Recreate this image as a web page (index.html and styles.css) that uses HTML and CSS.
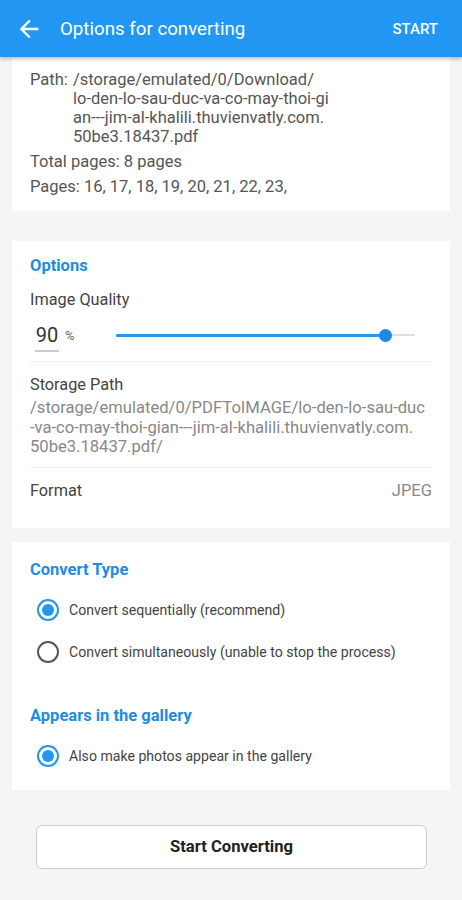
FILE: index.html
```html
<!DOCTYPE html>
<html lang="en">
<head>
    <meta charset="UTF-8">
    <title>Options for converting</title>
    <link rel="stylesheet" href="styles.css">
</head>
<body>
    <div class="app-bar">
        <svg class="back-icon" width="28" height="28" viewBox="0 0 24 24">
            <path d="M20 11H7.83l5.59-5.59L12 4l-8 8 8 8 1.41-1.41L7.83 13H20v-2z" fill="#fff"/>
        </svg>
        <div class="app-title">Options for converting</div>
        <div class="app-action">START</div>
    </div>

    <div class="content">
        <!-- File info -->
        <div class="card info-card">
            <div class="path-row">
                <span class="path-label">Path:</span>
                <span class="path-value">/storage/emulated/0/Download/<br>lo-den-lo-sau-duc-va-co-may-thoi-gi<br>an---jim-al-khalili.thuvienvatly.com.<br>50be3.18437.pdf</span>
            </div>
            <div class="info-line">Total pages: 8 pages</div>
            <div class="info-line">Pages: 16, 17, 18, 19, 20, 21, 22, 23,</div>
        </div>

        <!-- Options -->
        <div class="card options-card">
            <div class="section-title">Options</div>
            <div class="label">Image Quality</div>
            <div class="quality-row">
                <div class="quality-value">90</div>
                <div class="quality-unit">%</div>
                <div class="slider">
                    <div class="slider-fill" style="width: 90%"></div>
                    <div class="slider-thumb" style="left: 90%"></div>
                </div>
            </div>
            <div class="divider"></div>
            <div class="label storage-label">Storage Path</div>
            <div class="storage-path">/storage/emulated/0/PDFToIMAGE/lo-den-lo-sau-duc<br>-va-co-may-thoi-gian---jim-al-khalili.thuvienvatly.com.<br>50be3.18437.pdf/</div>
            <div class="divider"></div>
            <div class="format-row">
                <span class="label">Format</span>
                <span class="format-value">JPEG</span>
            </div>
        </div>

        <!-- Convert type -->
        <div class="card type-card">
            <div class="section-title">Convert Type</div>
            <div class="radio-row">
                <span class="radio checked"></span>
                <span>Convert sequentially (recommend)</span>
            </div>
            <div class="radio-row">
                <span class="radio"></span>
                <span>Convert simultaneously (unable to stop the process)</span>
            </div>
            <div class="section-title gallery-title">Appears in the gallery</div>
            <div class="radio-row">
                <span class="radio checked"></span>
                <span>Also make photos appear in the gallery</span>
            </div>
        </div>

        <button class="start-button">Start Converting</button>
    </div>
</body>
</html>
```

FILE: styles.css
```css
/* Reset */
* {
    box-sizing: border-box;
    margin: 0;
    padding: 0;
}

body {
    font-family: Roboto, "Noto Sans", Arial, sans-serif;
    background: #f5f5f5;
    color: #444;
    width: 462px;
    height: 900px;
    overflow: hidden;
}

/* App bar */
.app-bar {
    height: 57px;
    background: #2196f3;
    display: flex;
    align-items: center;
    padding: 0 24px 0 15px;
    color: #fff;
    box-shadow: 0 2px 4px rgba(0, 0, 0, 0.25);
    position: relative;
    z-index: 1;
}

.back-icon {
    display: block;
    margin-top: 1px;
}

.app-title {
    font-size: 18.7px;
    margin-left: 17px;
    flex: 1;
}

.app-action {
    font-size: 15px;
    font-weight: 500;
}

/* Content */
.content {
    padding: 0 12px;
}

.card {
    background: #fff;
    padding: 0 18px;
}

/* File info card */
.info-card {
    padding-top: 13px;
    padding-bottom: 15px;
    font-size: 16.5px;
    line-height: 19px;
    color: #555;
}

.path-row {
    display: flex;
}

.path-label {
    width: 43px;
    flex-shrink: 0;
}

.info-line {
    margin-top: 6px;
}

/* Options card */
.options-card {
    margin-top: 30px;
    padding-top: 15px;
    padding-bottom: 27px;
}

.section-title {
    color: #1e8de0;
    font-size: 16.5px;
    font-weight: 700;
    line-height: 20px;
}

.label {
    font-size: 16.3px;
    line-height: 20px;
    color: #444;
}

.options-card .section-title + .label {
    margin-top: 14px;
}

.quality-row {
    display: flex;
    align-items: center;
    height: 32px;
    margin-top: 10px;
}

.quality-value {
    width: 24px;
    margin-left: 5px;
    font-size: 20px;
    line-height: 30px;
    color: #333;
    border-bottom: 2px solid #ccc;
    text-align: center;
}

.quality-unit {
    font-size: 13px;
    color: #666;
    margin-left: 6px;
    margin-bottom: 2px;
}

.slider {
    flex: 1;
    height: 2px;
    background: #ddd;
    margin: 0 17px 2px 41px;
    position: relative;
}

.slider-fill {
    height: 3px;
    margin-top: -0.5px;
    background: #2196f3;
    border-radius: 2px;
}

.slider-thumb {
    position: absolute;
    top: 50%;
    width: 13px;
    height: 13px;
    margin: -6.5px 0 0 -6.5px;
    border-radius: 50%;
    background: #1e88e5;
}

.divider {
    height: 1px;
    background: #eee;
    margin-top: 9px;
}

.storage-label {
    margin-top: 13px;
}

.storage-path {
    font-size: 16.6px;
    line-height: 19.5px;
    color: #888;
    margin-top: 3px;
    margin-bottom: 10px;
    white-space: nowrap;
}

.format-row {
    display: flex;
    justify-content: space-between;
    margin-top: 13px;
}

.format-value {
    font-size: 16.5px;
    line-height: 20px;
    color: #888;
}

/* Convert type card */
.type-card {
    margin-top: 14px;
    padding-top: 18px;
    padding-bottom: 13px;
}

.type-card .section-title + .radio-row {
    margin-top: 9px;
}

.gallery-title {
    margin-top: 33px;
}

.radio-row {
    display: flex;
    align-items: center;
    height: 42px;
    padding-left: 7px;
    font-size: 14.1px;
    color: #444;
}

.radio {
    width: 22px;
    height: 22px;
    border-radius: 50%;
    border: 2px solid #555;
    margin-right: 10px;
    flex-shrink: 0;
    display: flex;
    align-items: center;
    justify-content: center;
}

.radio.checked {
    border-color: #2196f3;
}

.radio.checked::after {
    content: "";
    width: 12px;
    height: 12px;
    border-radius: 50%;
    background: #2196f3;
}

/* Bottom button */
.start-button {
    display: block;
    width: calc(100% - 47px);
    height: 44px;
    margin: 35px 0 0 24px;
    background: #fff;
    border: 1px solid #ccc;
    border-radius: 6px;
    font-family: Roboto, "Noto Sans", Arial, sans-serif;
    font-size: 16.6px;
    font-weight: 700;
    color: #222;
}
```
